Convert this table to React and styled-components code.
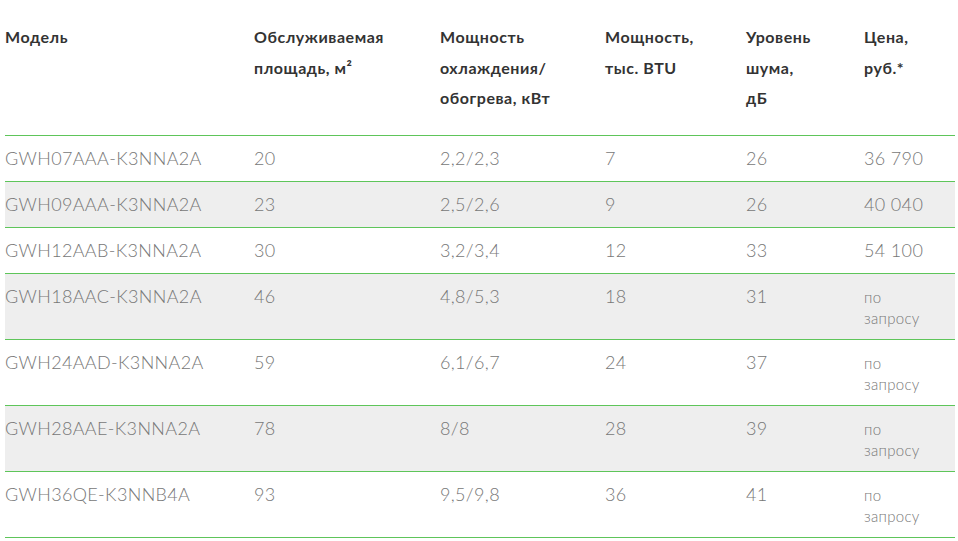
import styled, { createGlobalStyle } from "styled-components";

const GlobalStyle = createGlobalStyle`
  body {
    margin: 0;
    background: #fff;
    font-family: "Lato", "Liberation Sans", sans-serif;
  }
`;

const Wrapper = styled.div`
  padding: 0 3px 0 5px;
`;

const Table = styled.table`
  width: 950px;
  border-collapse: collapse;
  table-layout: fixed;
`;

const HeadCell = styled.th`
  width: ${(p) => p.$w}px;
  padding: 22px 0 21px;
  text-align: left;
  vertical-align: top;
  font-size: 16px;
  line-height: 30.5px;
  font-weight: 700;
  letter-spacing: 0.55px;
  color: #333;
  border-bottom: 1px solid #5ec55a;
`;

const Row = styled.tr`
  background: ${(p) => (p.$striped ? "#eeeeee" : "#fff")};
  border-bottom: 1px solid #5ec55a;
`;

const Cell = styled.td`
  padding: 10px 0 10px;
  vertical-align: baseline;
  font-size: 18px;
  line-height: 25px;
  font-weight: 300;
  letter-spacing: 0.35px;
  color: #777;
`;

const Small = styled.div`
  font-size: 15px;
  line-height: 21px;
  letter-spacing: 0.3px;
`;

const columns = [
  { w: 249, title: ["Модель"] },
  { w: 186, title: ["Обслуживаемая", "площадь, м²"] },
  { w: 165, title: ["Мощность", "охлаждения/", "обогрева, кВт"] },
  { w: 141, title: ["Мощность,", "тыс. BTU"] },
  { w: 118, title: ["Уровень", "шума,", "дБ"] },
  { w: 91, title: ["Цена,", "руб.*"] },
];

const rows = [
  ["GWH07AAA-K3NNA2A", "20", "2,2/2,3", "7", "26", "36 790"],
  ["GWH09AAA-K3NNA2A", "23", "2,5/2,6", "9", "26", "40 040"],
  ["GWH12AAB-K3NNA2A", "30", "3,2/3,4", "12", "33", "54 100"],
  ["GWH18AAC-K3NNA2A", "46", "4,8/5,3", "18", "31", null],
  ["GWH24AAD-K3NNA2A", "59", "6,1/6,7", "24", "37", null],
  ["GWH28AAE-K3NNA2A", "78", "8/8", "28", "39", null],
  ["GWH36QE-K3NNB4A", "93", "9,5/9,8", "36", "41", null],
];

export default function App() {
  return (
    <Wrapper>
      <GlobalStyle />
      <Table>
        <thead>
          <tr>
            {columns.map((c, i) => (
              <HeadCell key={i} $w={c.w}>
                {c.title.map((t, j) => (
                  <span key={j}>
                    {j > 0 && <br />}
                    {t}
                  </span>
                ))}
              </HeadCell>
            ))}
          </tr>
        </thead>
        <tbody>
          {rows.map((r, i) => (
            <Row key={i} $striped={i % 2 === 1}>
              {r.map((v, j) => (
                <Cell key={j}>
                  {v === null ? (
                    <Small>
                      по
                      <br />
                      запросу
                    </Small>
                  ) : (
                    v
                  )}
                </Cell>
              ))}
            </Row>
          ))}
        </tbody>
      </Table>
    </Wrapper>
  );
}
